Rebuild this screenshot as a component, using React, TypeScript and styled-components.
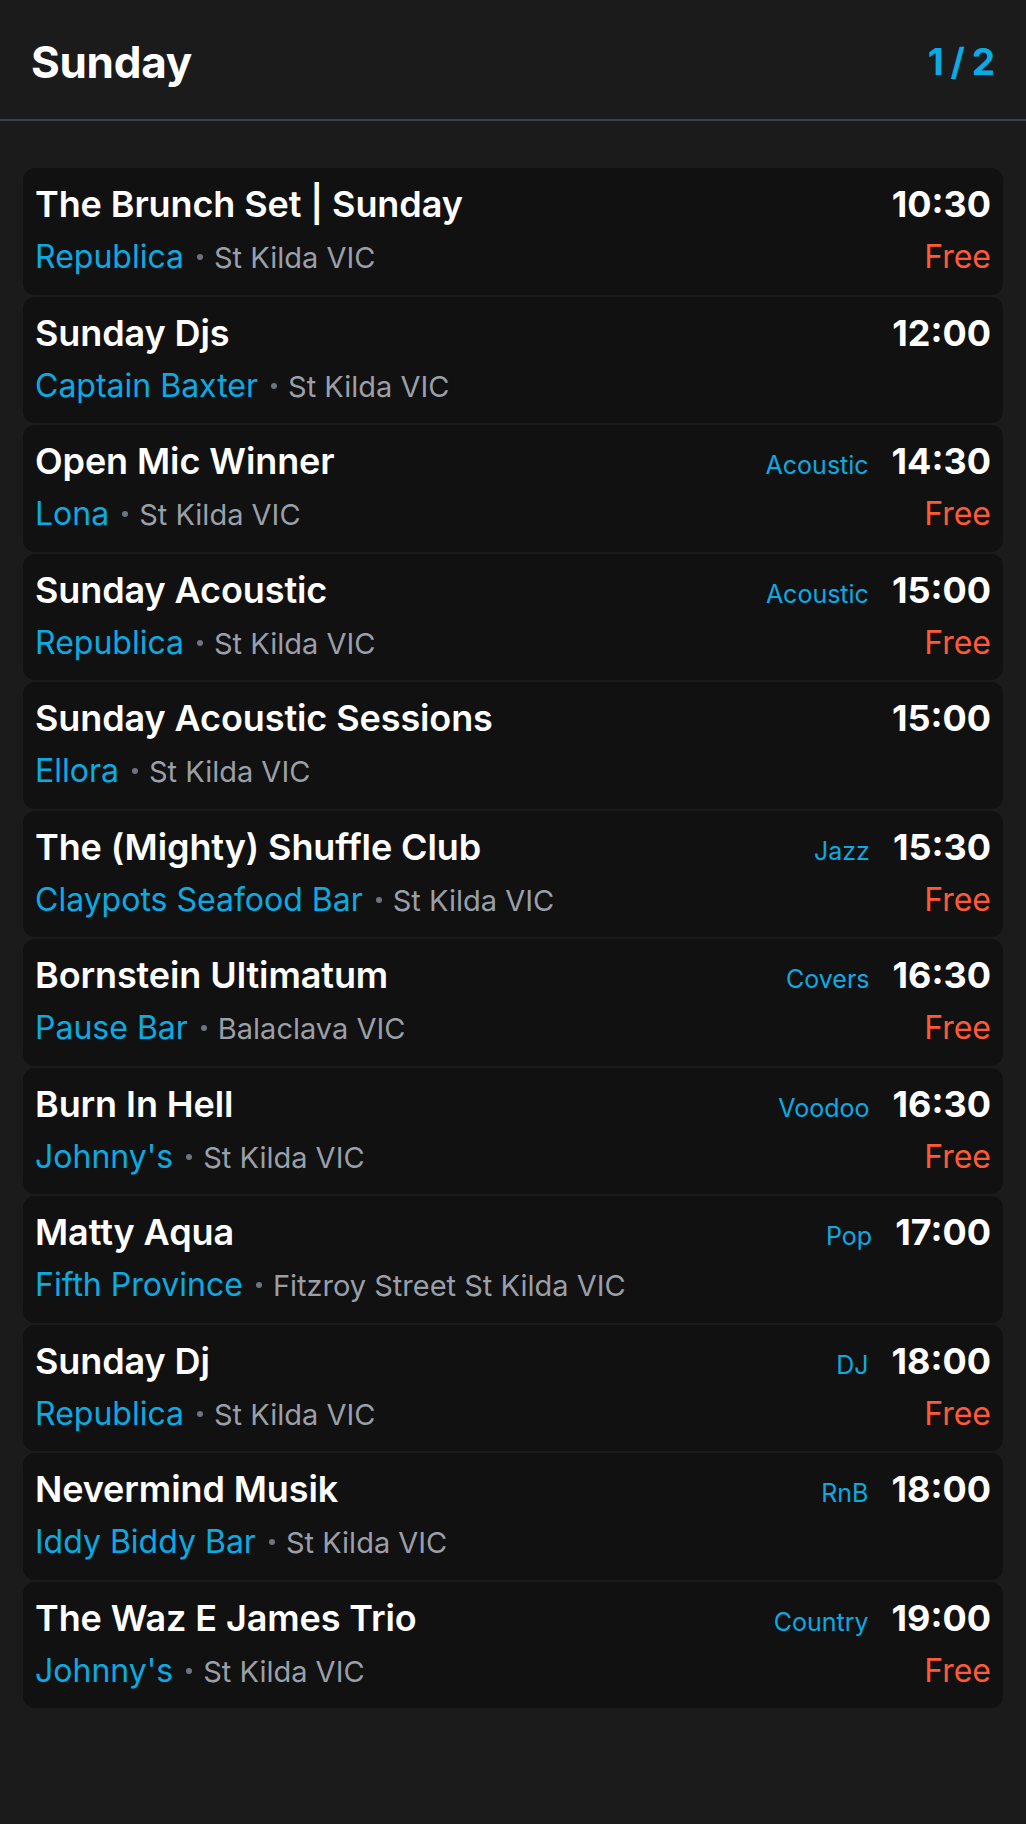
import React from "react";
import styled, { createGlobalStyle } from "styled-components";

const GlobalStyle = createGlobalStyle`
  html, body {
    margin: 0;
    padding: 0;
    background: #1b1b1b;
  }
  body {
    font-family: Inter, "Noto Sans", "Liberation Sans", sans-serif;
    -webkit-font-smoothing: antialiased;
  }
  * { box-sizing: border-box; }
`;

const Page = styled.div`
  min-height: 1824px;
  width: 1026px;
  background: #1b1b1b;
  color: #fff;
`;

const Header = styled.header`
  height: 121px;
  padding: 4px 31px 0 31px;
  border-bottom: 2px solid #3a4250;
  display: flex;
  align-items: center;
  justify-content: space-between;
`;

const DayTitle = styled.h1`
  margin: 0;
  font-size: 44px;
  line-height: 1;
  font-weight: 700;
  letter-spacing: -0.3px;
  color: #ffffff;
`;

const Pager = styled.div`
  font-size: 37px;
  line-height: 1;
  font-weight: 700;
  word-spacing: -2px;
  color: #0aabe3;
`;

const List = styled.main`
  padding: 47px 23px 0 23px;
  display: flex;
  flex-direction: column;
  gap: 2px;
`;

const Card = styled.article`
  background: #111111;
  border-radius: 12px;
  height: 126.5px;
  padding: 14px 12px 0 12px;
  display: flex;
  flex-direction: column;
  gap: 10px;
`;

const Row = styled.div`
  display: flex;
  align-items: baseline;
  justify-content: space-between;
`;

const Title = styled.div`
  font-size: 36px;
  line-height: 44px;
  font-weight: 600;
  letter-spacing: -0.1px;
  color: #ffffff;
  white-space: nowrap;
`;

const Right = styled.div`
  display: flex;
  align-items: baseline;
  gap: 23px;
`;

const Genre = styled.span`
  font-size: 25px;
  font-weight: 400;
  color: #0aabe3;
`;

const Time = styled.span`
  font-size: 36px;
  line-height: 44px;
  font-weight: 700;
  color: #ffffff;
`;

const Place = styled.div`
  line-height: 42px;
  white-space: nowrap;
  display: flex;
  align-items: baseline;
`;

const Venue = styled.span`
  font-size: 32px;
  color: #0aabe3;
`;

const Dot = styled.span`
  display: inline-block;
  width: 6px;
  height: 6px;
  border-radius: 50%;
  background: #6e737c;
  margin: 0 11px 0 13px;
  transform: translateY(-8px);
`;

const Location = styled.span`
  font-size: 29px;
  color: #9a9fa8;
`;

const Price = styled.span`
  font-size: 32px;
  line-height: 42px;
  color: #ff5a36;
`;

type Gig = {
  title: string;
  genre?: string;
  time: string;
  venue: string;
  location: string;
  free?: boolean;
};

const gigs: Gig[] = [
  { title: "The Brunch Set | Sunday", time: "10:30", venue: "Republica", location: "St Kilda VIC", free: true },
  { title: "Sunday Djs", time: "12:00", venue: "Captain Baxter", location: "St Kilda VIC" },
  { title: "Open Mic Winner", genre: "Acoustic", time: "14:30", venue: "Lona", location: "St Kilda VIC", free: true },
  { title: "Sunday Acoustic", genre: "Acoustic", time: "15:00", venue: "Republica", location: "St Kilda VIC", free: true },
  { title: "Sunday Acoustic Sessions", time: "15:00", venue: "Ellora", location: "St Kilda VIC" },
  { title: "The (Mighty) Shuffle Club", genre: "Jazz", time: "15:30", venue: "Claypots Seafood Bar", location: "St Kilda VIC", free: true },
  { title: "Bornstein Ultimatum", genre: "Covers", time: "16:30", venue: "Pause Bar", location: "Balaclava VIC", free: true },
  { title: "Burn In Hell", genre: "Voodoo", time: "16:30", venue: "Johnny's", location: "St Kilda VIC", free: true },
  { title: "Matty Aqua", genre: "Pop", time: "17:00", venue: "Fifth Province", location: "Fitzroy Street St Kilda VIC" },
  { title: "Sunday Dj", genre: "DJ", time: "18:00", venue: "Republica", location: "St Kilda VIC", free: true },
  { title: "Nevermind Musik", genre: "RnB", time: "18:00", venue: "Iddy Biddy Bar", location: "St Kilda VIC" },
  { title: "The Waz E James Trio", genre: "Country", time: "19:00", venue: "Johnny's", location: "St Kilda VIC", free: true },
];

export default function App() {
  return (
    <>
      <GlobalStyle />
      <Page>
        <Header>
          <DayTitle>Sunday</DayTitle>
          <Pager>1 / 2</Pager>
        </Header>
        <List>
          {gigs.map((g, i) => (
            <Card key={i}>
              <Row>
                <Title>{g.title}</Title>
                <Right>
                  {g.genre && <Genre>{g.genre}</Genre>}
                  <Time>{g.time}</Time>
                </Right>
              </Row>
              <Row>
                <Place>
                  <Venue>{g.venue}</Venue>
                  <Dot />
                  <Location>{g.location}</Location>
                </Place>
                {g.free && <Price>Free</Price>}
              </Row>
            </Card>
          ))}
        </List>
      </Page>
    </>
  );
}
